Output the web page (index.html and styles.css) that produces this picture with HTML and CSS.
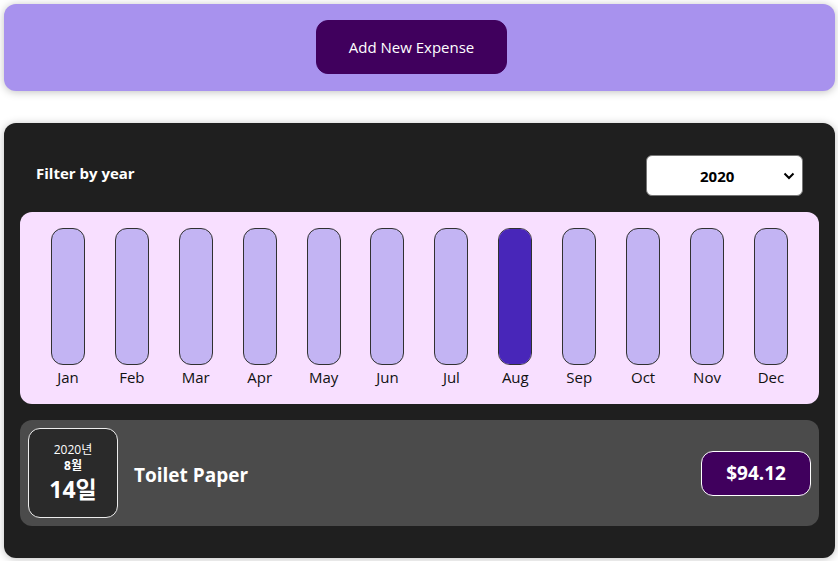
FILE: index.html
```html
<!DOCTYPE html>
<html lang="en">
<head>
<meta charset="utf-8">
<title>Expenses</title>
<link rel="stylesheet" href="styles.css">
</head>
<body>
<div class="page">
  <div class="new-expense">
    <button class="add-btn" type="button">Add New Expense</button>
  </div>
  <div class="expenses">
    <div class="filter">
      <label class="filter-label" for="year">Filter by year</label>
      <div class="select-wrap">
        <select id="year" class="year-select">
          <option>2022</option>
          <option>2021</option>
          <option selected>2020</option>
          <option>2019</option>
        </select>
        <svg class="chev" width="12" height="8" viewBox="0 0 12 8"><path d="M1.5 1.5 L6 6 L10.5 1.5" fill="none" stroke="#000" stroke-width="2"/></svg>
      </div>
    </div>
    <div class="chart">
      <div class="bar"><div class="bar-inner"></div><div class="bar-label">Jan</div></div>
      <div class="bar"><div class="bar-inner"></div><div class="bar-label">Feb</div></div>
      <div class="bar"><div class="bar-inner"></div><div class="bar-label">Mar</div></div>
      <div class="bar"><div class="bar-inner"></div><div class="bar-label">Apr</div></div>
      <div class="bar"><div class="bar-inner"></div><div class="bar-label">May</div></div>
      <div class="bar"><div class="bar-inner"></div><div class="bar-label">Jun</div></div>
      <div class="bar"><div class="bar-inner"></div><div class="bar-label">Jul</div></div>
      <div class="bar"><div class="bar-inner"><div class="bar-fill" style="height:100%"></div></div><div class="bar-label">Aug</div></div>
      <div class="bar"><div class="bar-inner"></div><div class="bar-label">Sep</div></div>
      <div class="bar"><div class="bar-inner"></div><div class="bar-label">Oct</div></div>
      <div class="bar"><div class="bar-inner"></div><div class="bar-label">Nov</div></div>
      <div class="bar"><div class="bar-inner"></div><div class="bar-label">Dec</div></div>
    </div>
    <div class="expense-item">
      <div class="expense-date">
        <div class="date-year">2020년</div>
        <div class="date-month">8월</div>
        <div class="date-day">14일</div>
      </div>
      <h2 class="expense-title">Toilet Paper</h2>
      <div class="expense-price">$94.12</div>
    </div>
  </div>
</div>
</body>
</html>
```
FILE: styles.css
```css
* { box-sizing: border-box; }
html, body { margin: 0; padding: 0; background: #fff; }
body {
  font-family: "Open Sans", "Noto Sans", "Noto Sans CJK KR", sans-serif;
  font-size: 16px;
}
.page {
  padding: 4px 3px 4px 4px;
  display: flex;
  flex-direction: column;
  gap: 32px;
}
.new-expense {
  background-color: #a892ee;
  padding: 16px;
  border-radius: 12px;
  text-align: center;
  box-shadow: 0 1px 8px rgba(0, 0, 0, 0.25);
  height: 87px;
}
.add-btn {
  font: inherit;
  font-size: 15px;
  padding: 15px 32px;
  height: 54px;
  border: 1px solid #40005d;
  background-color: #40005d;
  color: #fff;
  border-radius: 12px;
  margin-right: 16px;
}
.expenses {
  padding: 16px;
  background-color: #1f1f1f;
  border-radius: 12px;
  box-shadow: 0 1px 8px rgba(0, 0, 0, 0.25);
}
.filter {
  color: #fff;
  padding: 0 16px;
  margin: 16px 0;
  display: flex;
  align-items: center;
  justify-content: space-between;
}
.filter-label {
  font-weight: bold;
  font-size: 15px;
  margin-bottom: 6px;
}
.select-wrap { position: relative; }
.year-select {
  font: inherit;
  font-weight: bold;
  font-size: 15px;
  width: 157px;
  height: 41px;
  padding: 0 0 0 53px;
  border: 1px solid #767676;
  border-radius: 6px;
  background: #fff;
  color: #000;
  appearance: none;
  -webkit-appearance: none;
}
.chev {
  position: absolute;
  right: 8px;
  top: 17px;
  pointer-events: none;
}
.chart {
  padding: 16px;
  border-radius: 12px;
  background-color: #f8dfff;
  display: flex;
  justify-content: space-around;
  height: 192px;
}
.bar {
  width: 34px;
  height: 100%;
  display: flex;
  flex-direction: column;
  align-items: center;
}
.bar-inner {
  flex: 1;
  width: 100%;
  border: 1px solid #313131;
  border-radius: 12px;
  background-color: #c3b4f3;
  overflow: hidden;
  display: flex;
  flex-direction: column;
  justify-content: flex-end;
}
.bar-fill {
  background-color: #4826b9;
  width: 100%;
}
.bar-label {
  font-size: 15px;
  line-height: 22px;
  padding-top: 1px;
  color: #111;
  white-space: nowrap;
}
.expense-item {
  display: flex;
  align-items: center;
  padding: 8px;
  margin: 16px 0;
  border-radius: 12px;
  background-color: #4b4b4b;
}
.expense-date {
  display: flex;
  flex-direction: column;
  align-items: center;
  justify-content: center;
  width: 90px;
  height: 90px;
  border: 1px solid #ececec;
  background-color: #2a2a2a;
  color: #fff;
  border-radius: 12px;
}
.date-year { font-size: 12px; line-height: 16px; }
.date-month { font-size: 12px; font-weight: bold; line-height: 16px; }
.date-day { font-size: 23px; font-weight: bold; line-height: 30px; }
.expense-title {
  flex: 1;
  margin: 0 16px;
  padding-top: 4px;
  color: #fff;
  font-size: 19px;
  font-weight: bold;
}
.expense-price {
  font-size: 19px;
  font-weight: bold;
  color: #fff;
  background-color: #40005d;
  border: 1px solid #fff;
  padding: 8px 24px;
  border-radius: 12px;
  height: 45px;
  line-height: 27px;
}
```
